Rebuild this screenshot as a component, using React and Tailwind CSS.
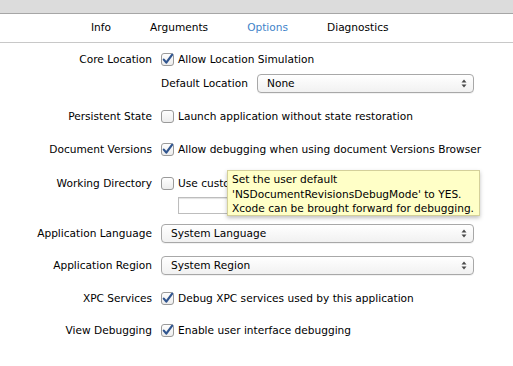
import React from "react";

const FONT = "font-['DejaVu_Sans',sans-serif]";

function Checkbox({ checked }) {
  return (
    <svg width="13" height="13" viewBox="0 0 13 13" className="shrink-0">
      <defs>
        <linearGradient id="cbg" x1="0" y1="0" x2="0" y2="1">
          <stop offset="0" stopColor="#ffffff" />
          <stop offset="1" stopColor="#ececec" />
        </linearGradient>
      </defs>
      <rect x="0.5" y="0.5" width="12" height="12" rx="2.5" fill="url(#cbg)" stroke="#9a9a9a" />
      {checked && (
        <path
          d="M2.8 6.6 L5.3 9.6 L11.2 1.6"
          fill="none"
          stroke="#30558f"
          strokeWidth="2.2"
          strokeLinecap="round"
          strokeLinejoin="round"
        />
      )}
    </svg>
  );
}

function Popup({ value, className }) {
  return (
    <div
      className={`h-[19px] flex items-center justify-between pl-[9px] pr-[6px] rounded-[4px] border border-[#a8a8a8] bg-gradient-to-b from-white to-[#f1f1f1] shadow-[0_1px_0_rgba(0,0,0,0.05)] ${className}`}
    >
      <span>{value}</span>
      <svg width="6" height="9" viewBox="0 0 6 9">
        <path d="M0.5 3.5 L3 0.5 L5.5 3.5 Z" fill="#4a4a4a" />
        <path d="M0.5 5.5 L3 8.5 L5.5 5.5 Z" fill="#4a4a4a" />
      </svg>
    </div>
  );
}

function Row({ label, children, className = "" }) {
  return (
    <div className={`flex items-center h-[18px] ${className}`}>
      <div className="w-[152px] shrink-0 text-right">{label}</div>
      <div className="ml-[9px] flex items-center flex-1">{children}</div>
    </div>
  );
}

function CheckRow({ label, checked, text, className, textClass = "" }) {
  return (
    <Row label={label} className={className}>
      <Checkbox checked={checked} />
      <span className={`ml-[4px] whitespace-nowrap ${textClass}`}>{text}</span>
    </Row>
  );
}

export default function App() {
  const tabs = ["Info", "Arguments", "Options", "Diagnostics"];

  return (
    <div className={`w-[513px] h-[366px] bg-white text-[10.6px] text-black ${FONT} overflow-hidden relative`}>
      {/* window chrome strip */}
      <div className="h-[14px] bg-[#dcdcdc] border-b border-[#a6a6a6]" />

      {/* tab bar */}
      <div className="h-[29px] flex items-center pl-[91px] gap-[39px] border-b border-[#c8c8c8]">
        {tabs.map((t) => (
          <span key={t} className={t === "Options" ? "text-[#3f83c9]" : ""}>
            {t}
          </span>
        ))}
      </div>

      <div className="flex flex-col">
        <CheckRow label="Core Location" checked text="Allow Location Simulation" className="mt-[8px]" />
        <div className="flex items-center mt-[5px] h-[19px]">
          <span className="ml-[161px] w-[96px]">Default Location</span>
          <Popup value="None" className="w-[217px]" />
        </div>

        <CheckRow
          label="Persistent State"
          text="Launch application without state restoration"
          className="mt-[15px]"
        />
        <CheckRow
          label="Document Versions"
          checked
          text="Allow debugging when using document Versions Browser"
          className="mt-[15px]"
        />
        {/* the tooltip hides the rest of this label */}
        <CheckRow
          label="Working Directory"
          text="Use custom working directory:"
          className="mt-[16px]"
          textClass="w-[50px] overflow-hidden"
        />
        <div className="mt-[4px] ml-[178px] w-[240px] h-[17px] border border-[#bdbdbd] shadow-[inset_0_1px_1px_rgba(0,0,0,0.12)]" />

        <Row label="Application Language" className="mt-[10px] h-[19px]">
          <Popup value="System Language" className="w-[313px]" />
        </Row>
        <Row label="Application Region" className="mt-[13px] h-[19px]">
          <Popup value="System Region" className="w-[313px]" />
        </Row>

        <CheckRow
          label="XPC Services"
          checked
          text="Debug XPC services used by this application"
          className="mt-[15px]"
        />
        <CheckRow
          label="View Debugging"
          checked
          text="Enable user interface debugging"
          className="mt-[14px]"
        />
      </div>

      {/* tooltip */}
      <div className="absolute left-[227px] top-[170px] w-[253px] h-[46px] bg-[#ffffc7] border border-[#d4d09a] shadow-[0_2px_4px_rgba(0,0,0,0.25)] pl-[4px] pt-[1px] leading-[14.5px] whitespace-nowrap">
        <div>Set the user default</div>
        <div>'NSDocumentRevisionsDebugMode' to YES.</div>
        <div>Xcode can be brought forward for debugging.</div>
      </div>
    </div>
  );
}
